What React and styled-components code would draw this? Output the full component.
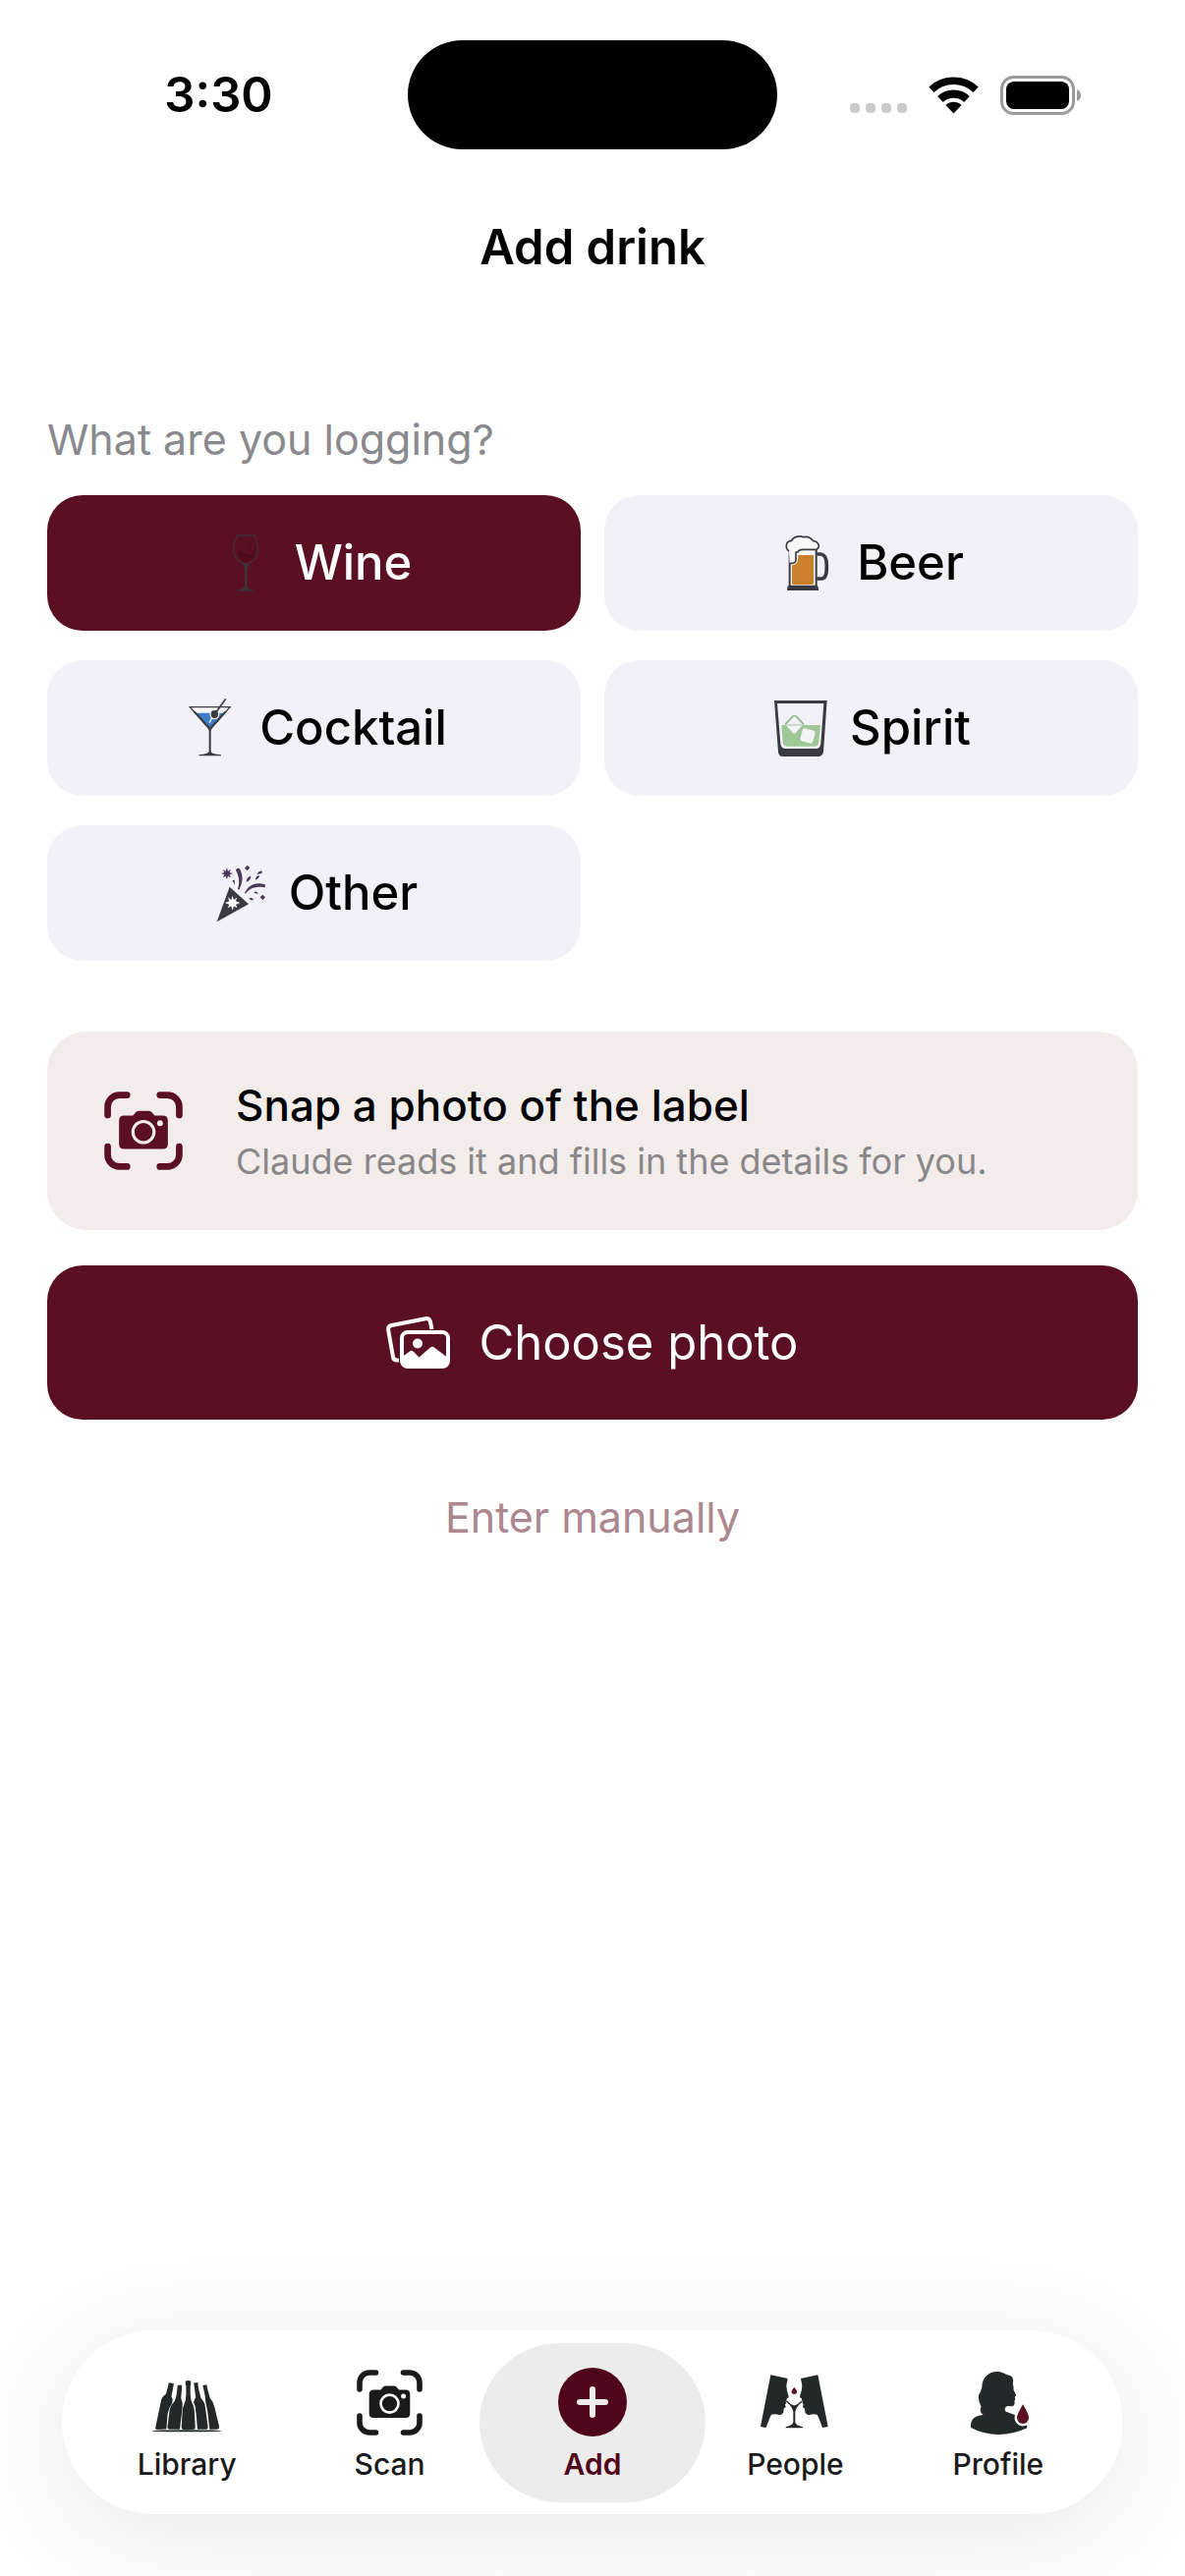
import React, { useState } from "react";
import styled, { createGlobalStyle } from "styled-components";

const GlobalStyle = createGlobalStyle`
    * {
        box-sizing: border-box;
    }

    body {
        margin: 0;
        background: #fefefe;
        color: #000;
        font-family: Inter, "Liberation Sans", sans-serif;
    }

    button {
        font-family: inherit;
        cursor: pointer;
    }
`;

const wine = "#5a0f22";
const ink = "#3a3b40";
const tabInk = "#232829";

const Screen = styled.div`
    min-height: 100vh;
    display: flex;
    flex-direction: column;
`;

/* status bar */
const StatusBar = styled.header`
    display: grid;
    grid-template-columns: 1fr 376px 1fr;
    align-items: center;
    padding-top: 41px;
`;

const Time = styled.time`
    padding-left: 30px;
    text-align: center;
    font-size: 49px;
    line-height: 60px;
    font-weight: 600;
`;

const Island = styled.div`
    height: 111px;
    border-radius: 56px;
    background: #000;
`;

const StatusIcons = styled.div`
    display: flex;
    justify-content: center;
    align-items: center;
    gap: 22px;
    padding-right: 31px;
`;

/* page */
const Title = styled.h1`
    margin: 70px 0 138px;
    text-align: center;
    font-size: 49px;
    line-height: 60px;
    font-weight: 600;
`;

const Main = styled.main`
    display: flex;
    flex-direction: column;
    padding: 0 48px;
`;

const Question = styled.h2`
    margin: 0 0 30px;
    color: #8a8a8e;
    font-size: 43px;
    line-height: 54px;
    font-weight: 400;
`;

const DrinkGrid = styled.div`
    display: grid;
    grid-template-columns: 1fr 1fr;
    gap: 30px 24px;
    margin-bottom: 72px;
`;

const DrinkButton = styled.button`
    display: flex;
    align-items: center;
    justify-content: center;
    gap: 20px;
    height: 138px;
    padding: 0 24px;
    border: 0;
    border-radius: 36px;
    background: ${(p) => (p.$active ? wine : "#f2f1f7")};
    color: ${(p) => (p.$active ? "#fff" : "#000")};
    font-size: 49px;
    line-height: 60px;
    font-weight: 500;
`;

const SnapCard = styled.section`
    display: flex;
    align-items: center;
    gap: 54px;
    padding: 48px 58px;
    border-radius: 40px;
    background: #f2eceb;
    color: ${wine};
`;

const SnapText = styled.div`
    display: flex;
    flex-direction: column;
    gap: 8px;
`;

const SnapTitle = styled.h3`
    margin: 0;
    color: #000;
    font-size: 44px;
    line-height: 54px;
    font-weight: 500;
`;

const SnapHint = styled.p`
    margin: 0;
    color: #8a8789;
    font-size: 36px;
    line-height: 44px;
`;

const ChooseButton = styled.button`
    display: flex;
    align-items: center;
    justify-content: center;
    gap: 28px;
    height: 157px;
    margin-top: 36px;
    border: 0;
    border-radius: 36px;
    background: ${wine};
    color: #fff;
    font-size: 49px;
    line-height: 60px;
`;

const ManualButton = styled.button`
    align-self: center;
    margin-top: 48px;
    padding: 24px;
    border: 0;
    background: none;
    color: #ac8790;
    font-size: 43px;
    line-height: 54px;
`;

/* tab bar */
const TabBar = styled.nav`
    margin: auto 63px 63px;
    padding: 13px 24px 12px;
    display: flex;
    border-radius: 94px;
    background: #fff;
    box-shadow: 0 20px 110px rgba(0, 0, 0, 0.09);
`;

/* the selected pill is wider than its column */
const Tab = styled.a`
    flex: 1 1 0;
    margin: 0 -12px;
    height: 162px;
    padding-top: 24px;
    display: flex;
    flex-direction: column;
    align-items: center;
    gap: 8px;
    border-radius: 81px;
    background: ${(p) => (p.$active ? "#ececec" : "transparent")};
    color: ${(p) => (p.$active ? "#50061b" : "#1a1a1a")};
    font-size: 30px;
    line-height: 38px;
    font-weight: ${(p) => (p.$active ? 600 : 500)};
    text-decoration: none;
`;

const TabIcon = styled.span`
    display: flex;
    align-items: center;
    justify-content: center;
    height: 72px;
`;

const SignalDots = () => (
    <svg width="58" height="38" viewBox="0 0 58 38" fill="#cbcbcb" aria-hidden="true">
        {[0, 16, 32, 48].map((x) => (
            <rect key={x} x={x} y="27" width="10" height="10" rx="4" />
        ))}
    </svg>
);

const Wifi = () => (
    <svg width="51" height="38" viewBox="0 0 51 38" fill="none" stroke="#000" aria-hidden="true">
        <path d="M2.9 13.2A33.2 33.2 0 0 1 48.1 13.2" strokeWidth="7.6" />
        <path d="M12 23A19.8 19.8 0 0 1 39 23" strokeWidth="8.3" />
        <path d="M25.5 37.5L17.5 28.9A11.7 11.7 0 0 1 33.5 28.9Z" fill="#000" stroke="none" />
    </svg>
);

const Battery = () => (
    <svg width="83" height="40" viewBox="0 0 83 40" aria-hidden="true">
        <rect x="1.5" y="1.5" width="73" height="37" rx="12" fill="none" stroke="#9b9b9b" strokeWidth="3" />
        <rect x="6" y="6" width="64" height="28" rx="8" />
        <path d="M78 14Q82 15.5 82 20T78 26Z" fill="#9b9b9b" />
    </svg>
);

const WineIcon = () => (
    <svg width="60" height="60" viewBox="30 69 180 180" fill="none" aria-hidden="true">
        <path d="M93 124Q106 118 118 130T150 128Q146 148 120 158Q98 150 93 124Z" fill="#520b1d" />
        <path d="M94 127Q106 118 118 132T148 130M132 92V106M128 120L138 116M138 134V144M146 116V126" stroke="#42101c" strokeWidth="3" />
        <path d="M94 75H148C153 90 159 104 158 121C156 146 138 158 121 163C104 158 86 146 83 121C82 104 89 90 94 75Z" stroke="#3d3036" strokeWidth="4" />
        <path d="M106 157Q121 166 136 157Q126 166 124 178V230Q125 238 144 243V245H90V243Q116 238 117 230V178Q116 166 106 157Z" fill="#3a3639" />
    </svg>
);

const BeerIcon = () => (
    <svg width="60" height="60" viewBox="48 69 180 180" fill="none" aria-hidden="true">
        <path d="M83 115V230H164V115Z" fill="#f8f7f7" stroke={ink} strokeWidth="6" />
        <path d="M109 135H156V221Q156 225 152 225H95Q90 225 90 221V166Q106 164 108 150Z" fill="#c9822b" />
        <path
            d="M81 123C67 112 72 91 89 91C94 79 111 75 125 80C139 77 150 84 154 91C168 92 176 105 169 114Q165 120 160 118H124Q111 118 108 126H102V150Q101 160 92 160H83"
            fill="#f8f7f7"
            stroke={ink}
            strokeWidth="5"
            strokeLinejoin="round"
        />
        <path d="M166 132H178C192 134 196 148 196 166C196 192 194 204 182 207H166" stroke={ink} strokeWidth="11" />
        <path d="M80 228H167Q171 230 171 243H75Q75 230 80 228Z" fill={ink} />
    </svg>
);

const CocktailIcon = () => (
    <svg width="60" height="60" viewBox="15 63 180 180" fill="none" aria-hidden="true">
        <path d="M42 88H166L104 158Z" fill="#f8f7f9" />
        <path d="M60 107H148L104 152Z" fill="#3b7dc6" />
        <path d="M43 89H165L104 158Z" stroke={ink} strokeWidth="4" />
        <path d="M56 103L104 155L152 103" stroke={ink} strokeWidth="6" />
        <path d="M97 150H111L107 162V224Q108 232 138 235V238H70V235Q100 232 101 224V162Z" fill={ink} />
        <path d="M116 112L102 137" stroke="#f8f7f9" strokeWidth="4" />
        <ellipse cx="118" cy="111" rx="13" ry="14" fill={ink} stroke="#f8f7f9" strokeWidth="4" />
        <path d="M152 64L122 106" stroke={ink} strokeWidth="5" />
    </svg>
);

const SpiritIcon = () => (
    <svg width="60" height="60" viewBox="51 63 180 180" fill="none" aria-hidden="true">
        <path d="M60 69H221L210 226Q207 240 195 240H86Q73 240 72 226Z" fill={ink} />
        <path d="M69 78H211L202 200Q200 216 188 216H94Q81 216 79 200Z" fill="#f2f1f7" />
        <path d="M82 144H201L196 196Q195 209 183 209H100Q87 209 86 196Z" fill="#9fc797" />
        <path d="M96 144H146L126 167Q121 173 116 167Z" fill="#f4f4f7" />
        <path d="M93 142L116 118Q122 113 128 118L150 142" stroke="#8fb98a" strokeWidth="5" />
        <path d="M92 144H150" stroke="#9fc797" strokeWidth="3" />
        <rect x="142" y="157" width="40" height="40" rx="7" fill="#f4f4f7" transform="rotate(16 162 177)" />
    </svg>
);

const OtherIcon = () => (
    <svg width="60" height="60" viewBox="36 57 180 180" fill="none" aria-hidden="true">
        <path d="M95 128L153 181L56 235Z" fill={ink} />
        <path
            d="M104 155L108 168L118 160L114 172L127 177L114 182L119 193L108 187L104 200L100 187L89 193L94 182L81 177L94 172L90 160L100 168Z"
            fill="#fff"
        />
        <g fill="#493858">
            <path d="M87 70L90 80L99 75L95 84L105 87L95 91L99 100L90 95L87 105L83 95L74 100L79 91L69 87L79 84L74 75L83 80Z" />
            <path d="M114 77Q118 68 127 74Q142 104 124 137L120 135Q130 104 114 77Z" />
            <path d="M141 147C155 118 177 114 204 121L203 130C176 126 160 130 143 149Z" />
            <path d="M149 62L157 70L149 79L141 71ZM196 152L204 160L196 168L188 160Z" />
            <path d="M146 113Q146 98 160 95Q160 108 146 113ZM174 107Q175 92 186 94Q186 102 174 107ZM179 90Q184 78 195 80L193 87ZM103 109L110 107L111 122Z" />
            <path d="M168 147L176 142L184 149ZM154 163L162 161L169 168L160 169Z" />
        </g>
    </svg>
);

const ScanIcon = ({ size, cutout }) => (
    <svg width={size} height={size} viewBox="2 2 67 67" fill="none" stroke="currentColor" aria-hidden="true">
        <g strokeWidth="5.6" strokeLinecap="round">
            <path d="M5 22V15A10 10 0 0 1 15 5H21.5" />
            <path d="M49.5 5H56A10 10 0 0 1 66 15V22" />
            <path d="M66 49V56A10 10 0 0 1 56 66H49.5" />
            <path d="M21.5 66H15A10 10 0 0 1 5 56V49" />
        </g>
        <path
            d="M19 22.5H26.5L29 19.5Q30 18.5 32 18.5H39.5Q41.5 18.5 42.5 19.5L45 22.5H52Q56.3 22.5 56.3 27V46.5Q56.3 51 52 51H19Q14.7 51 14.7 46.5V27Q14.7 22.5 19 22.5Z"
            fill="currentColor"
            stroke="none"
        />
        <circle cx="35.5" cy="36.6" r="9" stroke={cutout} strokeWidth="2.6" />
        <circle cx="49.6" cy="29" r="2.5" fill={cutout} stroke="none" />
    </svg>
);

const PhotosIcon = () => (
    <svg width="66" height="54" viewBox="0 0 66 54" fill="none" aria-hidden="true">
        <path
            d="M13 44.5H11Q7.5 44.5 7 41L2.2 14Q1.5 9.8 5.5 9L40 2.2Q44 1.5 45 5.5L46.5 13"
            stroke="#fff"
            strokeWidth="4"
        />
        <rect x="16" y="16" width="47" height="35" rx="6" stroke="#fff" strokeWidth="4" />
        <circle cx="32" cy="27.5" r="5" fill="#fff" />
        <path d="M15 42L24 35.5Q26 34 28 36L33.5 41.5L45 31.5Q47 30 49 31.5L64 43V47Q64 52 58 52H22Q15 52 15 46Z" fill="#fff" />
    </svg>
);

const LibraryIcon = () => (
    <svg width="72" height="72" viewBox="0 0 72 72" fill={tabInk} aria-hidden="true">
        <path d="M17.8 16.2L22.9 17L22.3 21L20.4 30.5Q22.5 33 21 37.5Q17.5 42 16.6 48L15.4 63.5L6 64Q3.9 64 4.2 62L10.3 33Q11 30 14.8 28L17 20Z" />
        <path d="M26.7 18.7H31V23L30.2 32Q32.2 36 31.6 42L29 63.8H18.5Q16.4 63.8 16.5 61L18.5 45Q19 40 23 36Q25.5 33 26.3 23Z" />
        <path d="M34.8 14.5Q37.5 13.5 40.2 14.5V19H39.7V28Q39.9 34 42 38Q43.6 41 43.8 45L44.7 61Q44.7 64 42.5 64H33Q30.6 64 30.7 61L31.7 45Q31.9 41 33.5 38Q35.3 34 35.4 28V19H34.8Z" />
        <path d="M43.2 16.5L47.3 16L48 22L50.5 32Q54.5 36 55 42L57.6 61Q57.7 63.8 55.5 63.8H47L45.6 48L44.6 40L43 36L45.2 31L44 22Z" />
        <path d="M52.3 19L56.3 18.3L57.5 24L59.8 32Q63.5 36 64.3 41L69 60.5Q69.3 63.5 67 63.8H59.3L57.3 46L55.3 36L54.7 30L53.5 24Z" />
        <ellipse cx="36" cy="65.3" rx="36" ry="1" />
    </svg>
);

const AddIcon = () => (
    <svg width="70" height="70" viewBox="0 0 70 70" aria-hidden="true">
        <circle cx="35" cy="35" r="35" fill="#50061b" />
        <path d="M35 22V48M22 35H48" stroke="#ececec" strokeWidth="6" strokeLinecap="round" />
    </svg>
);

const Face = () => (
    <path d="M52 52L104 63L100 84Q100 100 107 118Q108 122 101 124V130L98 133L99 139L96 142L98 150L92 155L91 166Q88 173 80 175Q66 170 54 173Q48 184 38 213L21 210Z" />
);

const PeopleIcon = () => (
    <svg width="72" height="72" viewBox="18 27 216 216" fill={tabInk} aria-hidden="true">
        <Face />
        <g transform="translate(248 0) scale(-1 1)">
            <Face />
        </g>
        <path d="M100 132Q112 145 124 148Q136 145 148 132" fill="none" stroke={tabInk} strokeWidth="4" />
        <path d="M110 144Q124 148 138 144Q128 154 127 164V196Q128 206 150 211V214H98V211Q120 206 121 196V164Q120 154 110 144Z" />
        <path d="M124 89Q132 99 132 103A8 8 0 0 1 116 103Q116 99 124 89Z" fill={wine} />
    </svg>
);

const ProfileIcon = () => (
    <svg width="72" height="72" viewBox="636 27 216 216" fill={tabInk} aria-hidden="true">
        <path d="M740 42C758 42 764 51 780 54C792 60 790 72 788 80Q792 88 790 96L798 113Q799 117 794 119L796 127L793 131L794 136Q794 148 784 148L772 147Q763 150 764 158Q764 164 772 166L796 175C824 180 832 195 832 214Q790 234 745 234Q700 234 660 213C658 190 668 178 698 174Q684 164 692 149Q682 132 684 115Q690 104 694 90C694 60 715 42 740 42Z" />
        <path
            d="M819 142Q838 172 838 183A19 19 0 0 1 800 183Q800 172 819 142Z"
            fill="#fff"
            stroke="#fff"
            strokeWidth="13"
        />
        <path d="M819 142Q837 172 837 183A18 18 0 0 1 801 183Q801 172 819 142Z" fill={wine} />
    </svg>
);

const drinks = [
    { name: "Wine", icon: WineIcon },
    { name: "Beer", icon: BeerIcon },
    { name: "Cocktail", icon: CocktailIcon },
    { name: "Spirit", icon: SpiritIcon },
    { name: "Other", icon: OtherIcon },
];

const tabs = [
    { name: "Library", icon: <LibraryIcon /> },
    { name: "Scan", icon: <ScanIcon size={67} cutout="#fff" /> },
    { name: "Add", icon: <AddIcon />, active: true },
    { name: "People", icon: <PeopleIcon /> },
    { name: "Profile", icon: <ProfileIcon /> },
];

const App = () => {
    const [drink, setDrink] = useState("Wine");

    return (
        <Screen>
            <GlobalStyle />
            <StatusBar>
                <Time>3:30</Time>
                <Island />
                <StatusIcons>
                    <SignalDots />
                    <Wifi />
                    <Battery />
                </StatusIcons>
            </StatusBar>

            <Title>Add drink</Title>

            <Main>
                <Question id="drink-question">What are you logging?</Question>
                <DrinkGrid role="group" aria-labelledby="drink-question">
                    {drinks.map(({ name, icon: Icon }) => (
                        <DrinkButton
                            key={name}
                            type="button"
                            $active={drink === name}
                            aria-pressed={drink === name}
                            onClick={() => setDrink(name)}
                        >
                            <Icon />
                            {name}
                        </DrinkButton>
                    ))}
                </DrinkGrid>

                <SnapCard>
                    <ScanIcon size={80} cutout="#f2eceb" />
                    <SnapText>
                        <SnapTitle>Snap a photo of the label</SnapTitle>
                        <SnapHint>Claude reads it and fills in the details for you.</SnapHint>
                    </SnapText>
                </SnapCard>

                <ChooseButton type="button">
                    <PhotosIcon />
                    Choose photo
                </ChooseButton>
                <ManualButton type="button">Enter manually</ManualButton>
            </Main>

            <TabBar>
                {tabs.map(({ name, icon, active }) => (
                    <Tab
                        key={name}
                        href={`#${name.toLowerCase()}`}
                        $active={active}
                        aria-current={active ? "page" : undefined}
                    >
                        <TabIcon>{icon}</TabIcon>
                        {name}
                    </Tab>
                ))}
            </TabBar>
        </Screen>
    );
};

export default App;
